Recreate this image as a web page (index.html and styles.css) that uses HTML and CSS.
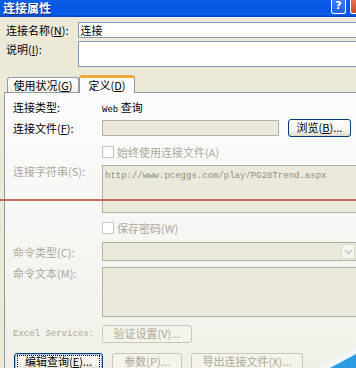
FILE: index.html
```html
<!DOCTYPE html>
<html lang="zh-CN">
<head>
    <meta charset="UTF-8">
    <meta name="viewport" content="width=device-width, initial-scale=1.0">
    <title>连接属性</title>
    <link rel="stylesheet" href="styles.css">
</head>
<body>
    <div class="window">
        <div class="titlebar">
            <span class="title">连接属性</span>
            <span class="tb-btn tb-help">?</span>
            <span class="tb-btn tb-close"></span>
        </div>
        <div class="dialog">
            <div class="top-row">
                <span class="top-label">连接名称(<u>N</u>):</span>
                <div class="edit name">连接</div>
            </div>
            <div class="top-row">
                <span class="top-label">说明(<u>I</u>):</span>
                <div class="edit desc"></div>
            </div>

            <div class="tabs">
                <div class="tab">使用状况(<u>G</u>)</div>
                <div class="tab active">定义(<u>D</u>)</div>
            </div>

            <div class="panel">
                <div class="row r-type">
                    <span class="lbl">连接类型:</span>
                    <span class="value"><span class="mono">Web</span> 查询</span>
                </div>
                <div class="row r-file">
                    <span class="lbl">连接文件(<u>F</u>):</span>
                    <div class="edit off file"></div>
                    <div class="btn browse">浏览(<u>B</u>)...</div>
                </div>
                <div class="row r-check1">
                    <span class="lbl"></span>
                    <span class="check"></span>
                    <span class="check-label">始终使用连接文件(A)</span>
                </div>
                <div class="row r-conn">
                    <span class="lbl dim">连接字符串(S):</span>
                    <div class="edit off area conn"><span class="mono">http://www.pceggs.com/play/PG28Trend.aspx</span></div>
                </div>
                <div class="row r-check2">
                    <span class="lbl"></span>
                    <span class="check"></span>
                    <span class="check-label">保存密码(W)</span>
                </div>
                <div class="row r-cmdtype">
                    <span class="lbl dim">命令类型(C):</span>
                    <div class="edit off select">
                        <span class="drop">
                            <svg width="9" height="6" viewBox="0 0 9 6"><path d="M1 1 L4.5 4.5 L8 1" fill="none" stroke="#c9c7ba" stroke-width="1.6"/></svg>
                        </span>
                    </div>
                </div>
                <div class="row r-cmdtext">
                    <span class="lbl dim">命令文本(M):</span>
                    <div class="edit off area cmdtext"></div>
                </div>
                <div class="row r-excel">
                    <span class="lbl dim mono">Excel Services:</span>
                    <div class="btn disabled verify">验证设置(V)...</div>
                </div>
                <div class="row r-buttons">
                    <div class="btn focus edit-query"><span class="focus-ring">编辑查询(<u>E</u>)...</span></div>
                    <div class="btn disabled params">参数(P)...</div>
                    <div class="btn disabled export">导出连接文件(X)...</div>
                </div>
            </div>
        </div>

        <div class="redline"></div>
        <svg class="corner" width="56" height="28" viewBox="0 0 56 28">
            <polygon points="18,28 56,8 56,14 30,28" fill="#f4f6f8"/>
            <polygon points="30,28 56,14 56,28" fill="#2b9be2"/>
        </svg>
    </div>
</body>
</html>
```

FILE: styles.css
```css
body {
    margin: 0;
    overflow: hidden;
    background: #ece9d8;
}
.window {
    position: relative;
    width: 372px;
    height: 368px;
    overflow: hidden;
    background: #ece9d8;
    font-family: "Noto Sans CJK SC", "DejaVu Sans", sans-serif;
    font-size: 11px;
    color: #000;
}
u {
    text-decoration: underline;
}
.mono {
    font-family: "Liberation Mono", "Noto Sans CJK SC", monospace;
    font-size: 9px;
}

/* title bar */
.titlebar {
    height: 17px;
    display: flex;
    align-items: flex-start;
    padding: 0 7px 0 3px;
    background: linear-gradient(to bottom, #0a5fe8 0%, #0555e4 55%, #0a5de6 85%, #0040c8 100%);
}
.title {
    flex: 1;
    color: #fff;
    font-weight: bold;
    font-size: 12px;
    line-height: 16px;
    text-shadow: 1px 1px 0 #0a2a80;
}
.tb-btn {
    width: 15px;
    height: 14px;
    border: 1px solid #fff;
    border-top: none;
    border-radius: 0 0 3px 3px;
    box-sizing: border-box;
}
.tb-help {
    margin-right: 4px;
    background: linear-gradient(to bottom, #3b7bf0, #2660e0);
    color: #fff;
    font-weight: bold;
    font-size: 11px;
    line-height: 12px;
    text-align: center;
    font-family: "DejaVu Sans", sans-serif;
}
.tb-close {
    background: linear-gradient(to bottom, #e6734f, #d04a25);
}

/* dialog body */
.dialog {
    padding-left: 4px;
}
.top-row {
    display: flex;
    padding-left: 2px;
    margin-top: 3px;
}
.top-row:first-child {
    margin-top: 5px;
}
.top-label {
    width: 73px;
    line-height: 16px;
}
.edit {
    box-sizing: border-box;
    background: #fff;
    border: 1px solid #7f9db9;
}
.edit.name {
    width: 300px;
    height: 16px;
    line-height: 14px;
    padding-left: 2px;
}
.edit.desc {
    width: 300px;
    height: 26px;
}
.edit.off {
    background: #ebe9dc;
    border-color: #b3b1a6;
}

/* tabs */
.tabs {
    display: flex;
    align-items: flex-end;
    height: 17px;
    margin-top: 8px;
    padding-left: 3px;
}
.tab {
    box-sizing: border-box;
    height: 15px;
    width: 72px;
    border: 1px solid #919b9c;
    border-bottom: none;
    border-radius: 3px 3px 0 0;
    background: linear-gradient(to bottom, #fff, #f1efe6);
    text-align: center;
    line-height: 14px;
    position: relative;
}
.tab.active {
    height: 18px;
    width: 56px;
    margin-bottom: -1px;
    background: #fcfcfe;
    border-top: 3px solid #f2a93b;
    line-height: 14px;
    z-index: 1;
}

/* tab page */
.panel {
    box-sizing: border-box;
    width: 380px;
    height: 290px;
    border: 1px solid #919b9c;
    background: linear-gradient(to bottom, #fcfcfe, #f4f3ee 70%, #f0efe7);
    padding: 7px 0 0 8px;
}
.row {
    display: flex;
    align-items: center;
}
.lbl {
    width: 89px;
    flex-shrink: 0;
}
.dim {
    color: #aca899;
}
.lbl.mono {
    font-size: 9px;
}
.r-type {
    height: 14px;
}
.r-file {
    height: 18px;
    margin-top: 5px;
}
.edit.file {
    width: 177px;
    height: 16px;
}
.r-check1 {
    height: 13px;
    margin-top: 8px;
}
.check {
    box-sizing: border-box;
    width: 12px;
    height: 12px;
    border: 1px solid #c9c7ba;
    background: #fff;
    margin-right: 3px;
}
.check-label {
    color: #aca899;
}
.r-conn {
    margin-top: 7px;
    align-items: flex-start;
}
.r-conn .lbl {
    line-height: 13px;
}
.edit.area {
    width: 255px;
}
.edit.conn {
    height: 48px;
    padding: 1px 2px;
    color: #8f8d83;
    line-height: 12px;
}
.r-check2 {
    height: 13px;
    margin-top: 8px;
}
.r-cmdtype {
    margin-top: 8px;
}
.edit.select {
    width: 255px;
    height: 19px;
    display: flex;
    justify-content: flex-end;
    padding: 1px;
}
.drop {
    width: 14px;
    height: 15px;
    box-sizing: border-box;
    border: 1px solid #dedcd2;
    background: #f5f4ee;
    display: flex;
    align-items: center;
    justify-content: center;
}
.r-cmdtext {
    margin-top: 6px;
    align-items: flex-start;
}
.r-cmdtext .lbl {
    line-height: 13px;
}
.edit.cmdtext {
    height: 50px;
}
.r-excel {
    height: 18px;
    margin-top: 8px;
}

/* buttons */
.btn {
    box-sizing: border-box;
    height: 18px;
    border: 1px solid #003c74;
    border-radius: 3px;
    background: linear-gradient(to bottom, #fff, #f3f2ec 70%, #dcd8cb);
    text-align: center;
    line-height: 15px;
}
.btn.browse {
    width: 63px;
    margin-left: 9px;
}
.btn.disabled {
    border-color: #c9c7ba;
    background: #f5f4ea;
    color: #aca899;
}
.btn.verify {
    width: 90px;
}
.r-buttons {
    margin-top: 10px;
    padding-left: 1px;
    gap: 9px;
    align-items: flex-start;
}
.btn.edit-query {
    width: 89px;
    padding: 1px 2px;
    box-shadow: inset 0 0 0 1px #a8c4f0;
}
.focus-ring {
    display: block;
    height: 12px;
    line-height: 11px;
    border: 1px dotted #000;
}
.btn.params {
    width: 70px;
}
.btn.export {
    width: 112px;
}

/* overlays */
.redline {
    position: absolute;
    left: 0;
    top: 199px;
    width: 100%;
    height: 2px;
    background: #c46a5f;
}
.corner {
    position: absolute;
    left: 300px;
    top: 340px;
}
```
